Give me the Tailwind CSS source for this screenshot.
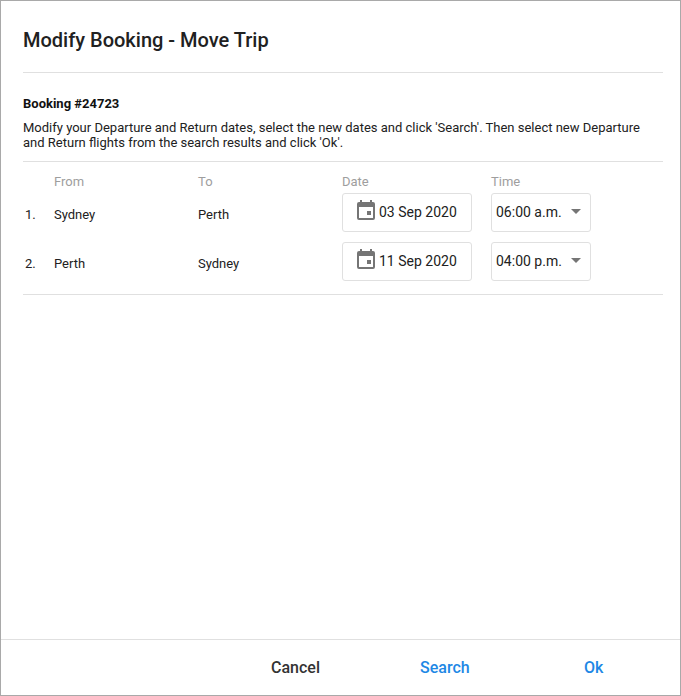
<!DOCTYPE html>
<html>
<head>
<meta charset="utf-8">
<script src="https://cdn.jsdelivr.net/npm/@tailwindcss/browser@4"></script>
</head>
<body class="m-0 bg-white">
<div class="w-[681px] h-[696px] border border-[#a9a9a9] bg-white flex flex-col font-['Roboto',sans-serif] text-[#212121] overflow-hidden">
  <div class="flex-1 pl-[22px] pr-[17px]">
    <h1 class="h-[72px] pt-[25px] text-[20px] leading-[28px] font-medium text-[#212121] border-b border-[#e0e0e0]">Modify Booking - Move Trip</h1>
    <div class="pt-[22px] text-[13px] font-bold leading-[18px] text-[#111]">Booking #24723</div>
    <p class="mt-[7px] text-[13px] leading-[15px] text-[#212121] pb-[11px] border-b border-[#e0e0e0]">Modify your Departure and Return dates, select the new dates and click 'Search'. Then select new Departure and Return flights from the search results and click 'Ok'.</p>
    <div class="grid grid-cols-[31px_144px_144px_149px_100px] text-[13px] border-b border-[#e0e0e0] pb-[13px]">
      <div></div>
      <div class="text-[#9e9e9e] h-[31px] pt-[12px] leading-[15px]">From</div>
      <div class="text-[#9e9e9e] pt-[12px] leading-[15px]">To</div>
      <div class="text-[#9e9e9e] pt-[12px] leading-[15px]">Date</div>
      <div class="text-[#9e9e9e] pt-[12px] leading-[15px]">Time</div>

      <div class="h-[49px] pt-[14px] pl-[2px] leading-[15px]">1.</div>
      <div class="pt-[14px] leading-[15px]">Sydney</div>
      <div class="pt-[14px] leading-[15px]">Perth</div>
      <div>
        <div class="w-[130px] h-[39px] border border-[#e0e0e0] rounded-[3px] flex items-center pl-[14px] gap-[4px] text-[14px]">
          <svg class="w-[18px] h-[20px] -mt-[5px]" viewBox="0 0 18 20" fill="#757575"><path d="M3 0h2v2h8V0h2v2h1a2 2 0 0 1 2 2v14a2 2 0 0 1-2 2H2a2 2 0 0 1-2-2V4a2 2 0 0 1 2-2h1V0zM2 7v11h14V7H2zm8 4h4v4h-4v-4z" fill-rule="evenodd"/></svg>
          <span>03 Sep 2020</span>
        </div>
      </div>
      <div>
        <div class="w-[100px] h-[39px] border border-[#e0e0e0] rounded-[3px] flex items-center pl-[4px] text-[14px] relative">
          <span>06:00 a.m.</span>
          <svg class="absolute right-[9px] top-[15px] w-[10px] h-[5px]" viewBox="0 0 10 5" fill="#757575"><path d="M0 0h10L5 5z"/></svg>
        </div>
      </div>

      <div class="h-[39px] pt-[14px] pl-[2px] leading-[15px]">2.</div>
      <div class="pt-[14px] leading-[15px]">Perth</div>
      <div class="pt-[14px] leading-[15px]">Sydney</div>
      <div>
        <div class="w-[130px] h-[39px] border border-[#e0e0e0] rounded-[3px] flex items-center pl-[14px] gap-[4px] text-[14px]">
          <svg class="w-[18px] h-[20px] -mt-[5px]" viewBox="0 0 18 20" fill="#757575"><path d="M3 0h2v2h8V0h2v2h1a2 2 0 0 1 2 2v14a2 2 0 0 1-2 2H2a2 2 0 0 1-2-2V4a2 2 0 0 1 2-2h1V0zM2 7v11h14V7H2zm8 4h4v4h-4v-4z" fill-rule="evenodd"/></svg>
          <span>11 Sep 2020</span>
        </div>
      </div>
      <div>
        <div class="w-[100px] h-[39px] border border-[#e0e0e0] rounded-[3px] flex items-center pl-[4px] text-[14px] relative">
          <span>04:00 p.m.</span>
          <svg class="absolute right-[9px] top-[15px] w-[10px] h-[5px]" viewBox="0 0 10 5" fill="#757575"><path d="M0 0h10L5 5z"/></svg>
        </div>
      </div>
    </div>
  </div>
  <div class="h-[56px] border-t border-[#e0e0e0] text-[16px] font-medium">
    <div class="h-full pl-[270px] flex items-center">
      <span class="w-[149px] text-[#333]">Cancel</span>
      <span class="w-[164px] text-[#1e88e5]">Search</span>
      <span class="text-[#1e88e5]">Ok</span>
    </div>
  </div>
</div>
</body>
</html>
